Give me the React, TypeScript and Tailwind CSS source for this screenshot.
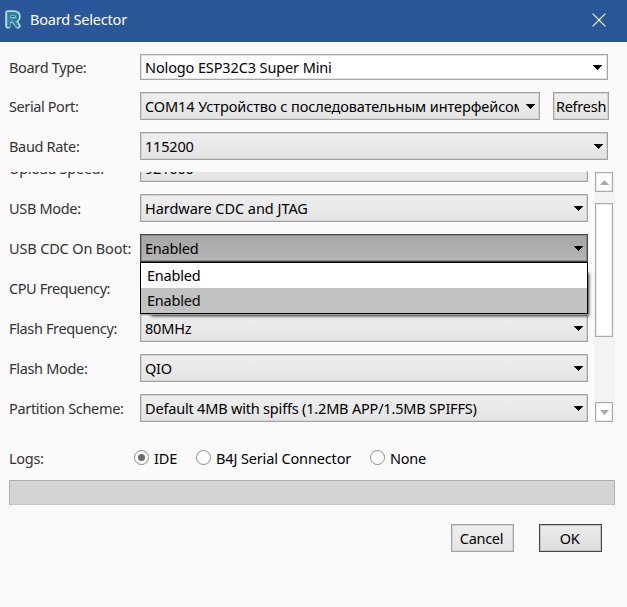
import React from "react";

const ARROW = (
  <svg width="9" height="5" viewBox="0 0 9 5" className="shrink-0" shapeRendering="crispEdges">
    <path d="M0 0h9v1h-1v1h-1v1h-1v1h-1v1h-1v-1h-1v-1h-1v-1h-1v-1h-1z" fill="#000" />
  </svg>
);

type Tone = "white" | "normal" | "active";

const tones: Record<Tone, string> = {
  white: "border-[#a6a6a6] bg-white pr-[5px] shadow-[inset_0_0_0_1px_#e3e3e3]",
  normal:
    "border-[#a3a3a3] bg-linear-to-b from-[#efefef] to-[#e4e4e4] pr-1 shadow-[inset_0_0_0_1px_#d3d3d3]",
  active:
    "border-[#454545] bg-linear-to-b from-[#a5a5a5] to-[#b6b6b6] pr-1 shadow-[inset_0_0_0_1px_#8c8c8c]",
};

function Combo({
  value,
  tone = "normal",
  size,
  text = "tracking-[-0.2px]",
}: {
  value: string;
  tone?: Tone;
  size: string;
  text?: string;
}) {
  return (
    <div className={`flex shrink-0 items-center border pl-1 text-black ${tones[tone]} ${size}`}>
      <span className={`min-w-0 flex-1 overflow-hidden whitespace-nowrap ${text}`}>{value}</span>
      <span className="ml-[7px] flex shrink-0">{ARROW}</span>
    </div>
  );
}

function Label({ children, text = "tracking-[-0.32px]" }: { children: React.ReactNode; text?: string }) {
  return <span className={`w-[131px] shrink-0 whitespace-nowrap ${text}`}>{children}</span>;
}

function Radio({ label, checked, text }: { label: string; checked?: boolean; text: string }) {
  return (
    <label className="flex items-center">
      <span className="mr-[5px] mb-0.5 flex size-[15px] items-center justify-center rounded-full border-[1.3px] border-[#8e8e8e] bg-white">
        {checked && <span className="size-[7px] rounded-full bg-[#6c6c6c]" />}
      </span>
      <span className={`whitespace-nowrap text-black ${text}`}>{label}</span>
    </label>
  );
}

function ScrollButton({ down }: { down?: boolean }) {
  return (
    <div className="flex h-5 w-[18px] items-center justify-center border border-[#ababab] bg-white shadow-[inset_0_0_0_1px_#ececec]">
      <svg width="9" height="5" viewBox="0 0 9 5" className={down ? "rotate-180" : ""}>
        <path d="M4.5 0L9 5H0z" fill="#aaa" />
      </svg>
    </div>
  );
}

const rows = [
  { label: "Upload Speed:", value: "921600" },
  { label: "USB Mode:", value: "Hardware CDC and JTAG", text: "tracking-[-0.04px]" },
  { label: "USB CDC On Boot:", value: "Enabled", open: true, labelText: "tracking-[-0.15px]" },
  { label: "CPU Frequency:", value: "", labelText: "tracking-[-0.42px]" },
  { label: "Flash Frequency:", value: "80MHz", labelText: "tracking-[-0.36px]" },
  { label: "Flash Mode:", value: "QIO" },
  {
    label: "Partition Scheme:",
    value: "Default 4MB with spiffs (1.2MB APP/1.5MB SPIFFS)",
    text: "tracking-[-0.19px]",
  },
];

export default function App() {
  return (
    <div className="h-[607px] w-[627px] overflow-hidden bg-[#fafafa] font-['Noto_Sans','Open_Sans',sans-serif] text-[14.5px] leading-5 text-[#333]">
      <header className="flex h-[42px] items-center bg-[#2a579a] pb-1 pl-[5px] text-white">
        <svg width="17" height="20" viewBox="0 0 17 20" className="mt-0.5 overflow-visible">
          <path
            d="M3 15.8V3H9q3.9 0 3.9 3.5T9 10H4M8.5 10L12.8 15.8"
            fill="none"
            stroke="#c0d2dd"
            strokeWidth="5.6"
            strokeLinejoin="round"
            strokeLinecap="round"
          />
          <path
            d="M3.8 17V3.6H9q3.5 0 3.5 3.1T9 9.8H4M8.5 10l4.3 7"
            fill="none"
            stroke="#26869b"
            strokeWidth="3.2"
          />
        </svg>
        <span className="ml-2 tracking-[-0.2px]">Board Selector</span>
        <svg width="14" height="14" viewBox="0 0 14 14" className="mt-px mr-[21px] ml-auto">
          <path d="M.7.7l12.6 12.6M13.3.7L.7 13.3" stroke="#fff" strokeWidth="1.2" />
        </svg>
      </header>

      <main className="pt-3 pl-[9px]">
        <div className="flex flex-col gap-3">
          <div className="flex items-center">
            <Label>Board Type:</Label>
            <Combo
              value="Nologo ESP32C3 Super Mini"
              tone="white"
              size="h-[26px] w-[468px]"
              text="tracking-[-0.12px]"
            />
          </div>
          <div className="flex items-center">
            <Label text="tracking-[-0.4px]">Serial Port:</Label>
            <Combo
              value="COM14 Устройство с последовательным интерфейсом"
              size="h-7 w-[400px]"
              text="tracking-[-0.08px]"
            />
            <button className="ml-[13px] h-7 w-14 border border-[#a3a3a3] bg-linear-to-b from-[#efefef] to-[#e4e4e4] text-black tracking-[-0.25px] shadow-[inset_0_0_0_1px_#d3d3d3]">
              Refresh
            </button>
          </div>
          <div className="flex items-center">
            <Label>Baud Rate:</Label>
            <Combo value="115200" size="h-7 w-[468px]" />
          </div>
        </div>

        <div className="mt-3 flex h-[250px]">
          <div className="flex h-[250px] w-[585px] flex-col justify-end gap-3 overflow-hidden">
            {rows.map((row) => (
              <div key={row.label} className="relative flex shrink-0 items-center">
                <Label text={row.labelText}>{row.label}</Label>
                <Combo
                  value={row.value}
                  tone={row.open ? "active" : "normal"}
                  size="h-7 w-[448px]"
                  text={row.text}
                />
                {row.open && (
                  <div className="absolute top-7 left-[131px] z-10 h-[52px] w-[448px] border border-black bg-white text-black">
                    <div className="absolute top-[9px] left-[9px] -z-10 h-[43px] w-[438px] shadow-[1px_1px_3px_rgba(0,0,0,0.8)]" />
                    <div className="h-[25px] bg-white pt-0.5 pl-1.5 tracking-[-0.2px]">Enabled</div>
                    <div className="h-[25px] bg-[#c2c2c2] pt-0.5 pl-1.5 tracking-[-0.2px]">Enabled</div>
                  </div>
                )}
              </div>
            ))}
          </div>
          <div className="flex w-[21px] flex-col bg-[#f3f3f3] pl-px">
            <ScrollButton />
            <div className="mt-[11px] mb-auto h-[134px] w-[18px] border border-[#ababab] bg-white shadow-[inset_0_0_0_1px_#ececec]" />
            <ScrollButton down />
          </div>
        </div>

        <div className="mt-[26px] flex h-5 items-center">
          <span className="w-[125px] tracking-[-0.3px]">Logs:</span>
          <div className="flex gap-[19px]">
            <Radio label="IDE" checked text="w-[23px] tracking-[-0.1px]" />
            <Radio label="B4J Serial Connector" text="w-[135px] tracking-[-0.14px]" />
            <Radio label="None" text="tracking-[-0.25px]" />
          </div>
        </div>

        <div className="mt-3 h-[25px] w-[606px] border border-[#adadad] border-b-[#c8c8c8] bg-[#d4d4d4]" />

        <div className="mt-[19px] flex gap-[25px] pl-[442px]">
          <button className="h-7 w-[63px] border border-[#a3a3a3] bg-linear-to-b from-[#efefef] to-[#e4e4e4] pr-0.5 text-black tracking-[-0.3px] shadow-[inset_0_0_0_1px_#d3d3d3]">
            Cancel
          </button>
          <button className="h-7 w-[63px] border border-[#454545] bg-linear-to-b from-[#ececec] to-[#dedede] pr-0.5 text-black tracking-[-0.3px] shadow-[inset_0_0_0_1px_#c4c4c4]">
            OK
          </button>
        </div>
      </main>
    </div>
  );
}
